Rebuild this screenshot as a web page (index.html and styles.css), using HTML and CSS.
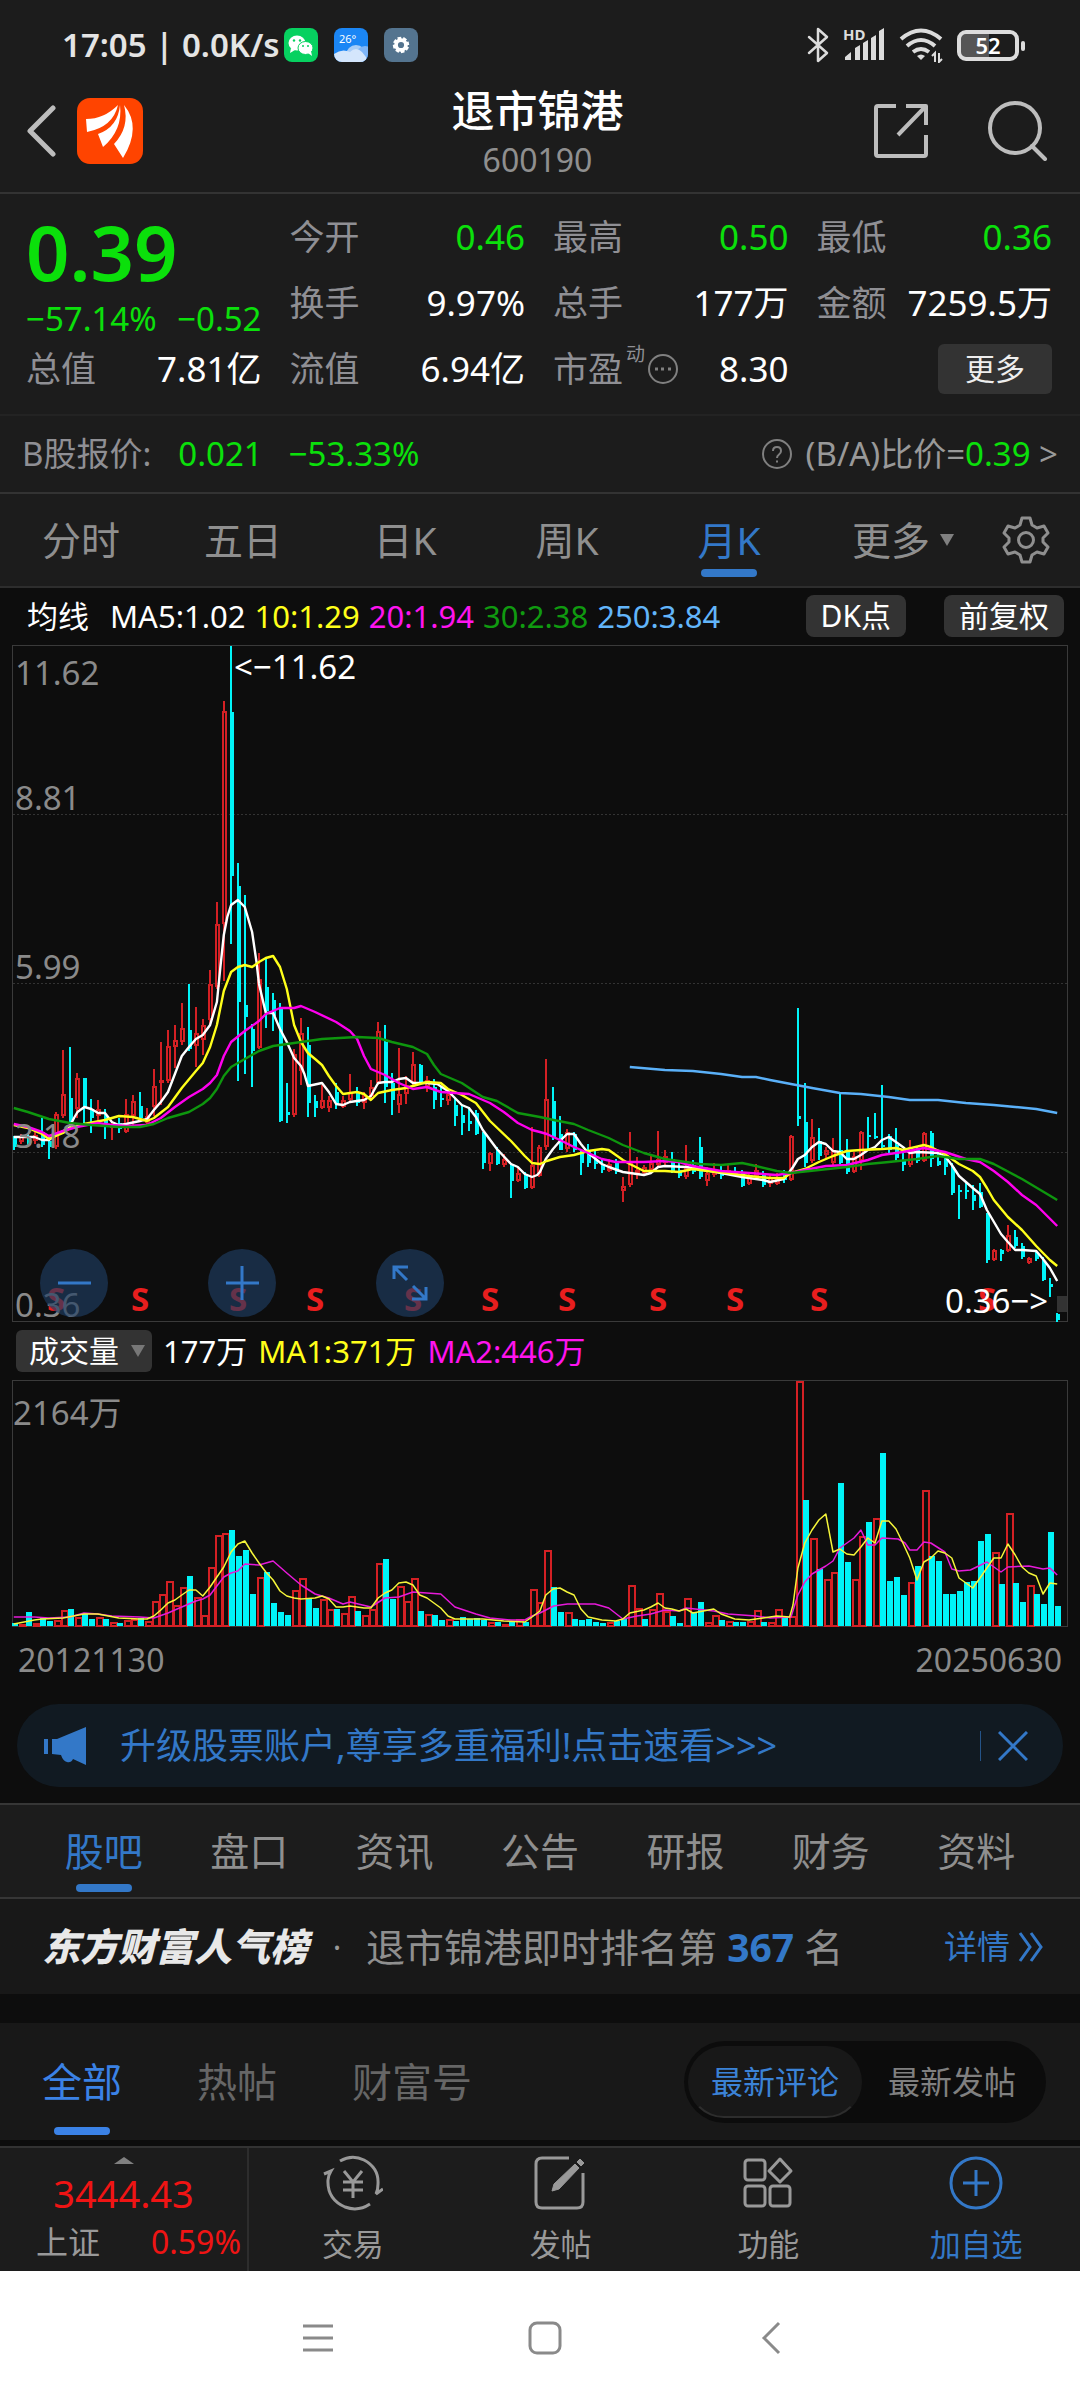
FILE: index.html
```html
<!DOCTYPE html>
<html lang="zh-CN">
<head>
<meta charset="utf-8">
<meta name="viewport" content="width=device-width, initial-scale=1">
<title>退市锦港 600190</title>
<link rel="stylesheet" href="styles.css">
</head>
<body>
<div class="statusbar">
  <div class="status-left">
    <span>17:05 | 0.0K/s</span>
    <svg class="app-badge" viewBox="0 0 34 34" aria-hidden="true"><rect width="34" height="34" rx="8" fill="#07d160"/><ellipse cx="13" cy="15" rx="8.500" ry="7.500" fill="#fff"/><path d="M7 20l-1 5 5-3z" fill="#fff"/><ellipse cx="21.500" cy="20" rx="7.500" ry="6.500" fill="#fff" stroke="#07d160"/><path d="M24 25l4 3-1-5z" fill="#fff"/><g fill="#07d160"><circle cx="10" cy="12.500" r="1.200"/><circle cx="16" cy="12.500" r="1.200"/><circle cx="19" cy="18" r="1"/><circle cx="24" cy="18" r="1"/></g></svg>
    <svg class="app-badge" viewBox="0 0 34 34" aria-hidden="true"><defs><clipPath id="wc"><rect width="34" height="34" rx="8"/></clipPath></defs><g clip-path="url(#wc)"><rect width="34" height="34" fill="#1b86f5"/><circle cx="22" cy="27" r="10" fill="#a9cdf7"/><circle cx="31" cy="27" r="9" fill="#7fb6f8"/><path d="M0 26q8-6 16-2 6-6 12 0 4 4 6 10H0z" fill="#d4e6fc"/></g><text x="5" y="15" font-size="11" fill="#fff">26°</text></svg>
    <svg class="app-badge" viewBox="0 0 34 34" aria-hidden="true"><rect width="34" height="34" rx="8" fill="#54748f"/><circle cx="17" cy="17" r="6.500" fill="none" stroke="#fff" stroke-width="3.500" /><circle cx="17" cy="17" r="4.600" fill="none" stroke="#fff" stroke-width="3"/><circle cx="17" cy="17" r="8" fill="none" stroke="#54748f" stroke-width="2.500" stroke-dasharray="2.200 4.083"/></svg>
  </div>
  <div class="status-right">
    <svg width="22" height="36" viewBox="0 0 22 36" fill="none" stroke="#dcdcdc" stroke-width="2.500" stroke-linejoin="round" stroke-linecap="round" aria-hidden="true"><path d="M2 10l18 16-9 8V2l9 8L2 26"/></svg>
    <svg class="signal" width="42" height="34" viewBox="0 0 42 34" fill="#dcdcdc" aria-hidden="true"><text x="0" y="12" font-size="15" font-weight="700">HD</text><path d="M2 32v-3l6-5v8zM12 20l5-3v15h-5zM20 15l5-3v20h-5zM28 10l5-3v25h-5zM36 3l5-3v32h-5z"/></svg>
    <svg width="44" height="36" viewBox="0 0 44 36" fill="none" stroke="#dcdcdc" stroke-width="4" aria-hidden="true"><path d="M2 12q20-17 40 0M8 19q14-12 28 0M14 25q8-6 16 0"/><path d="M22 33l-4-4q4-3 8 0z" fill="#dcdcdc" stroke="none"/><path d="M36 35v-9l-3 3M40 26v9l3-3" stroke-width="2"/></svg>
    <div class="battery">52</div>
  </div>
</div>

<header class="topbar">
  <div class="top-side">
    <button class="bare" aria-label="返回"><svg width="30" height="52" viewBox="0 0 30 52" fill="none" stroke="#bdbdbd" stroke-width="5" stroke-linecap="round" stroke-linejoin="round"><path d="M26 3L3 26l23 23"/></svg></button>
    <svg class="logo" viewBox="0 0 66 66" aria-hidden="true"><rect width="66" height="66" rx="13" fill="#ff4400"/><g fill="#fff"><path d="M9 21q18 0 32-14-5 22-31 27z"/><path d="M43 7q3 25-17 42l-5-13q20-7 22-29z"/><path d="M47 7q18 22-1 53l-9-14q16-17 10-39z"/></g></svg>
  </div>
  <div class="top-title"><h1>退市锦港</h1><p>600190</p></div>
  <div class="top-side end">
    <button class="bare" aria-label="分享"><svg width="54" height="54" viewBox="0 0 54 54" fill="none" stroke="#bdbdbd" stroke-width="4" stroke-linejoin="round"><path d="M22 2H4q-2 0-2 2v46q0 2 2 2h46q2 0 2-2V31M32 2h20v19M52 2L24 31"/></svg></button>
    <button class="bare" aria-label="搜索"><svg width="60" height="60" viewBox="0 0 60 60" fill="none" stroke="#bdbdbd" stroke-width="4" stroke-linecap="round"><circle cx="27" cy="27" r="25"/><path d="M44 45l13 13"/></svg></button>
  </div>
</header>

<section class="quote">
  <div class="quote-grid">
    <div class="price">
      <strong>0.39</strong>
      <div class="change"><span>−57.14%</span><span>−0.52</span></div>
    </div>
    <div class="kv"><span>今开</span><b class="down">0.46</b></div>
    <div class="kv"><span>最高</span><b class="down">0.50</b></div>
    <div class="kv"><span>最低</span><b class="down">0.36</b></div>
    <div class="kv"><span>换手</span><b>9.97%</b></div>
    <div class="kv"><span>总手</span><b>177万</b></div>
    <div class="kv"><span>金额</span><b>7259.5万</b></div>
    <div class="kv"><span>总值</span><b>7.81亿</b></div>
    <div class="kv"><span>流值</span><b>6.94亿</b></div>
    <div class="kv"><span class="pe">市盈<sup>动</sup><svg width="30" height="30" viewBox="0 0 30 30" fill="none" stroke="#808080" stroke-width="2" aria-hidden="true"><circle cx="15" cy="15" r="14"/><path d="M7 15h3M13 15h3M20 15h3" stroke-width="3"/></svg></span><b>8.30</b></div>
    <div class="kv last"><button class="more">更多</button></div>
  </div>
  <div class="bshare">
    <span class="bshare-label">B股报价:</span><span class="down">0.021</span><span class="down bshare-pct">−53.33%</span>
    <a href="#ratio" class="ratio"><svg width="30" height="30" viewBox="0 0 30 30" aria-hidden="true"><circle cx="15" cy="15" r="14" fill="none" stroke="#808080" stroke-width="2"/><path d="M11 12q0-4 4-4t4 4q0 2-2 3.500-2 1.500-2 3.500M15 21.500v2" fill="none" stroke="#808080" stroke-width="2"/></svg><span>(B/A)比价=<span class="down">0.39</span> &gt;</span></a>
  </div>
</section>

<nav class="periods">
  <button>分时</button><button>五日</button><button>日K</button><button>周K</button><button class="on">月K</button><button>更多<i class="caret"></i></button>
  <button class="gear" aria-label="设置"><svg width="48" height="48" viewBox="0 0 48 48" fill="none" stroke="#8f8f8f" stroke-width="3" stroke-linejoin="round"><path d="M20 2h8l2 7 5 3 7-2 4 7-5 5v4l5 5-4 7-7-2-5 3-2 7h-8l-2-7-5-3-7 2-4-7 5-5v-4l-5-5 4-7 7 2 5-3z"/><circle cx="24" cy="24" r="7.500"/></svg></button>
</nav>

<main class="charts">
  <div class="ma-row">
    <span class="ma-name">均线</span><span>MA5:1.02</span><span class="yellow">10:1.29</span><span class="pink">20:1.94</span><span class="green">30:2.38</span><span class="blue">250:3.84</span>
    <div class="ma-actions"><button>DK点</button><button>前复权</button></div>
  </div>
  <div class="price-chart">
    <svg id="price" viewBox="0 0 1080 677" role="img" aria-label="月K线"></svg>
    <div class="zoomers">
      <button aria-label="缩小"><svg viewBox="0 0 68 68"><path d="M18 34h33"/></svg></button>
      <button aria-label="放大"><svg viewBox="0 0 68 68"><path d="M18 34h33M34 17v34"/></svg></button>
      <button aria-label="全屏"><svg viewBox="0 0 68 68"><path d="M18 30V18h14M18 18l13 13M50 38v12H36M50 50L37 37"/></svg></button>
    </div>
  </div>
  <div class="vol-row">
    <label class="picker"><select aria-label="指标"><option>成交量</option></select><i class="caret"></i></label>
    <span>177万</span><span class="yellow">MA1:371万</span><span class="pink">MA2:446万</span>
  </div>
  <svg id="volume" viewBox="0 0 1080 248" role="img" aria-label="成交量"></svg>
  <div class="dates"><span>20121130</span><span>20250630</span></div>
  <div class="promo">
    <svg width="42" height="38" viewBox="0 0 42 38" fill="#3378c8" aria-hidden="true"><path d="M0 12h4v15H0zM8 12h5L42 0v38l-13-6q-2 4-6 3t-6-7l-9-1z"/></svg>
    <a href="#promo">升级股票账户,尊享多重福利!点击速看&gt;&gt;&gt;</a>
    <button class="bare close" aria-label="关闭"><svg width="30" height="30" viewBox="0 0 30 30" stroke="#3378c8" stroke-width="3"><path d="M1 1l28 28M29 1L1 29"/></svg></button>
  </div>
</main>

<nav class="sections">
  <button class="on">股吧</button><button>盘口</button><button>资讯</button><button>公告</button><button>研报</button><button>财务</button><button>资料</button>
</nav>

<section class="rank">
  <h2>东方财富人气榜</h2><span class="dot">·</span>
  <p>退市锦港即时排名第 <b>367</b> 名</p>
  <a href="#rank">详情<svg width="26" height="30" viewBox="0 0 26 30" fill="none" stroke="#3378c8" stroke-width="3" aria-hidden="true"><path d="M2 1l10 14L2 29M13 1l10 14-10 14"/></svg></a>
</section>

<section class="posts">
  <button class="on">全部</button><button>热帖</button><button>财富号</button>
  <div class="toggle"><button class="picked">最新评论</button><button>最新发帖</button></div>
</section>

<footer class="dock">
  <a href="#index" class="index">
    <i class="caret up"></i>
    <strong>3444.43</strong>
    <span class="index-row"><span>上证</span><em>0.59%</em></span>
  </a>
  <a href="#trade"><svg width="60" height="56" viewBox="0 0 60 56" fill="none" stroke="#999" stroke-width="3" aria-hidden="true"><path d="M17 6q12-7 24-1 15 8 14 24 0 6-2 10l7-5M47 49q-12 8-25 3-18-8-17-27 0-4 3-9l-7 3"/><path d="M21 16l9 11 9-11M30 27v16M20 27h20M20 35h20"/></svg>交易</a>
  <a href="#post"><svg width="56" height="56" viewBox="0 0 56 56" fill="none" stroke="#999" stroke-width="3" aria-hidden="true"><path d="M36 3H9q-6 0-6 6v38q0 6 6 6h35q6 0 6-6V18"/><path d="M19 36l2-7 21-20 4 4-20 21z M44 7l3-3 4 4-3 3z" fill="#999" stroke-width="1"/></svg>发帖</a>
  <a href="#tools"><svg width="56" height="56" viewBox="0 0 56 56" fill="none" stroke="#999" stroke-width="3" stroke-linejoin="round" aria-hidden="true"><rect x="5" y="5" width="20" height="20" rx="3"/><rect x="5" y="31" width="20" height="20" rx="3"/><rect x="30" y="31" width="20" height="20" rx="3"/><path d="M40 4l11 12-11 11-11-11z"/></svg>功能</a>
  <a href="#watch" class="add"><svg width="56" height="56" viewBox="0 0 56 56" fill="none" stroke="#3378c8" stroke-width="3" aria-hidden="true"><circle cx="28" cy="28" r="25"/><path d="M15 28h26M28 15v26"/></svg>加自选</a>
</footer>

<div class="sysnav">
  <button class="bare" aria-label="菜单"><svg width="30" height="32" viewBox="0 0 30 32" stroke="#8a8a8a" stroke-width="3"><path d="M0 4h30M0 16h30M0 28h30"/></svg></button>
  <button class="bare" aria-label="主页"><svg width="34" height="34" viewBox="0 0 34 34" fill="none" stroke="#8a8a8a" stroke-width="3"><rect x="2" y="2" width="30" height="30" rx="7"/></svg></button>
  <button class="bare" aria-label="后退"><svg width="26" height="34" viewBox="-4 0 26 34" fill="none" stroke="#8a8a8a" stroke-width="3"><path d="M18 2L3 17l15 15"/></svg></button>
</div>
<script src="chart.js"></script>
</body>
</html>
```
FILE: styles.css
```css
* { box-sizing: border-box; }
body {
  display: flex;
  flex-direction: column;
  min-height: 100vh;
  margin: 0;
  background: #0d0d0d;
  color: #fff;
  font: 32px/40px "Noto Sans", "Noto Sans CJK SC", sans-serif;
}
h1, h2, p { margin: 0; font-weight: 400; }
button, select { font: inherit; color: inherit; background: none; border: 0; padding: 0; margin: 0; }
a { color: inherit; text-decoration: none; }
svg { display: block; flex: none; }
.bare { display: flex; }
.down { color: #0be00b; }
.yellow { color: #ffff1a; }
.pink { color: #ff14ee; }
.green { color: #109a10; }
.blue { color: #62b5fa; }
.caret {
  display: inline-block;
  border: 7px solid transparent;
  border-top: 12px solid #808080;
  border-bottom: 0;
}

.statusbar {
  display: flex;
  justify-content: space-between;
  padding: 25px 55px 23px 62px;
  background: #1c1c1c;
  color: #e4e4e4;
}
.status-left, .status-right { display: flex; align-items: center; }
.status-left { gap: 16px; font-size: 33px; font-weight: 600; }
.status-left span { margin-right: -12px; }
.status-right { gap: 14px; }
.signal { overflow: visible; }
.app-badge { width: 34px; height: 34px; font-weight: 400; }
.battery {
  position: relative;
  width: 62px;
  border: 4px solid #dcdcdc;
  border-radius: 9px;
  margin-right: 6px;
  background: linear-gradient(90deg, #555 52%, #1c1c1c 52%);
  color: #fff;
  font-size: 22px;
  font-weight: 600;
  line-height: 23px;
  text-align: center;
}
.battery::after {
  content: "";
  position: absolute;
  right: -10px;
  top: 7px;
  width: 4px;
  height: 10px;
  border-radius: 2px;
  background: #dcdcdc;
}

.topbar {
  display: flex;
  align-items: center;
  justify-content: space-between;
  padding: 0 32px 5px 27px;
  background: #1c1c1c;
  border-bottom: 2px solid #333;
}
.top-side { flex: 1; display: flex; align-items: center; gap: 20px; padding-bottom: 14px; }
.top-side.end { justify-content: flex-end; gap: 60px; }
.logo { width: 66px; height: 66px; }
.top-title { text-align: center; }
.top-title h1 { font-size: 43px; line-height: 45px; font-weight: 500; }
.top-title p { color: #8f8f8f; line-height: 54px; }

.quote { background: #1c1c1c; border-bottom: 2px solid #333; }
.quote-grid {
  display: grid;
  grid-template-columns: repeat(4, 1fr);
  grid-auto-rows: 66px;
  gap: 0 28px;
  padding: 10px 28px 12px 26px;
  border-bottom: 2px solid #232323;
}
.price { grid-row: span 2; display: flex; flex-direction: column; color: #0be00b; }
.price strong { font-size: 76px; line-height: 96px; font-weight: 600; }
.change { display: flex; justify-content: space-between; font-size: 33px; line-height: 38px; }
.kv { display: flex; align-items: center; justify-content: space-between; font-size: 35px; }
.kv > span { color: #8f8f94; }
.kv b { font-size: 35px; font-weight: 400; }
.kv.last { justify-content: flex-end; }
.pe { display: flex; align-items: center; gap: 3px; }
.pe sup { align-self: flex-start; font-size: 19px; line-height: 10px; }
.more { width: 114px; height: 50px; border-radius: 6px; background: #333; font-size: 30px; color: #eee; }
.bshare { display: flex; padding: 18px 22px; font-size: 33px; }
.bshare-label { color: #8f8f94; margin-right: 27px; }
.bshare-pct { margin-left: 26px; }
.ratio { display: flex; align-items: center; gap: 14px; margin-left: auto; color: #999; }

.periods { display: grid; grid-template-columns: repeat(6, 3fr) 2fr; background: #1c1c1c; border-bottom: 2px solid #2d2d2d; }
.periods button, .sections button, .posts > button { position: relative; color: #8f8f8f; font-size: 39px; line-height: 92px; }
.periods .gear { display: flex; align-items: center; justify-content: center; }
.periods .caret { position: absolute; right: 18px; top: 40px; }
.periods .on, .sections .on { color: #3378c8; }
.on::after {
  content: "";
  position: absolute;
  left: calc(50% - 28px);
  bottom: 9px;
  width: 56px;
  height: 8px;
  border-radius: 4px;
  background: currentColor;
}

.ma-row { display: flex; align-items: center; gap: 9px; padding: 7px 16px 8px 27px; font-size: 31px; line-height: 42px; }
.ma-name { margin-right: 12px; }
.ma-actions { display: flex; gap: 38px; margin-left: auto; }
.ma-actions button { padding: 0 15px; border-radius: 8px; background: #333; font-size: 30px; line-height: 42px; }
.price-chart { position: relative; }
.price-chart svg, #volume { width: 100%; height: auto; }
.zoomers { position: absolute; left: 40px; bottom: 5px; display: flex; gap: 100px; }
.zoomers button { width: 68px; height: 68px; border-radius: 50%; background: rgba(30, 62, 98, .65); }
.zoomers svg { fill: none; stroke: #3378c8; stroke-width: 3; }
.axis { fill: #8a8a8a; font-size: 33px; }
.mark { fill: #fff; font-size: 33px; }
.sell { fill: #e81e1e; font-size: 33px; font-weight: 700; text-anchor: middle; }

.vol-row { display: flex; align-items: center; gap: 11px; padding: 8px 16px; font-size: 31px; line-height: 42px; }
.picker { display: flex; align-items: center; gap: 12px; width: 136px; padding: 0 7px 0 13px; border-radius: 6px; background: #333; }
.picker select { appearance: none; width: 92px; font-size: 30px; line-height: 42px; }
.picker .caret { border-top-color: #777; flex: none; }
.dates { display: flex; justify-content: space-between; padding: 12px 18px 24px; color: #8a8a8a; }
.promo {
  display: flex;
  align-items: center;
  gap: 34px;
  margin: 0 17px 16px;
  padding: 0 35px 0 27px;
  border-radius: 42px;
  background: #111a22;
  color: #3378c8;
  font-size: 36px;
  line-height: 83px;
}
.close { margin-left: auto; padding-left: 17px; border-left: 1px solid #245388; }

.sections { display: grid; grid-template-columns: repeat(7, 1fr); padding: 0 31px; background: #1c1c1c; border: solid #363636; border-width: 2px 0; }
.sections .on::after { bottom: 5px; }
.rank { display: flex; align-items: center; padding: 0 36px 0 42px; background: #181818; line-height: 95px; margin-bottom: 29px; }
.rank h2 { color: #e8e8e8; font-size: 38px; font-style: italic; font-weight: 900; }
.dot { width: 58px; text-align: center; color: #999; }
.rank p { color: #8f8f8f; font-size: 39px; }
.rank b { color: #3378c8; font-weight: 700; }
.rank a { display: flex; align-items: center; gap: 8px; margin-left: auto; color: #3378c8; font-size: 33px; }

.posts { display: flex; align-items: center; gap: 75px; padding: 0 34px 0 42px; background: #181818; margin-bottom: 6px; }
.posts > button { color: #666; font-size: 40px; line-height: 117px; }
.posts > .on { color: #3b82e6; }
.posts .on::after { bottom: 5px; }
.toggle { display: flex; margin-left: auto; padding: 5px 4px; border-radius: 42px; background: #0c0c0c; font-size: 32px; line-height: 68px; color: #808080; }
.toggle button { padding: 0 24px; border-radius: 36px; border: 2px solid transparent; }
.toggle .picked { padding: 0 21px; color: #3b82d6; background: #181818; border-bottom-color: #2d2d2d; }

.dock { display: grid; grid-template-columns: 249px repeat(4, 1fr); border-top: 2px solid #333; background: #1c1c1c; color: #999; }
.dock > a { display: flex; flex-direction: column; align-items: center; gap: 13px; padding: 7px 0; font-size: 31px; }
.dock > .index { gap: 6px; padding: 9px 0 0; border-right: 2px solid #2d2d2d; font-size: 32px; }
.index strong { color: #f01414; font-size: 38px; line-height: 46px; font-weight: 400; }
.caret.up { border: 10px solid transparent; border-top: 0; border-bottom: 7px solid #808080; }
.index-row { display: flex; justify-content: space-between; width: 100%; padding: 0 6px 0 36px; }
.index-row em { color: #f01414; font-style: normal; }
.dock > .add { color: #3378c8; }

.sysnav { flex: 1; display: flex; align-items: center; justify-content: center; gap: 195px; padding: 49px 0 45px 6px; background: #fff; }
```
FILE: chart.js
```js
// One row per month: direction, high, body top, body bottom, low.
// Heights count downwards from the top of the plot.
var candles = `d 1130 1135 1155 1160,u 1125 1130 1143 1148,d 1125 1132 1150 1152,u 1120 1128 1140 1148,d 1090 1120 1150 1154,d 1130 1140 1155 1180,u 1075 1080 1155 1158,u 938 1035 1085 1090,d 930 1045 1100 1105,u 988 1000 1070 1090,
d 1000 1000 1065 1100,d 1047 1070 1090 1123,u 1050 1070 1085 1100,d 1070 1085 1100 1137,u 1100 1105 1110 1138,d 1090 1100 1115 1122,u 1046 1080 1120 1122,u 1037 1052 1085 1110,d 1030 1062 1090 1095,u 1066 1085 1100 1105,
u 980 1018 1065 1085,u 918 1005 1007 1060,u 893 928 1007 1010,u 880 914 930 978,u 832 888 920 925,d 790 892 935 940,u 840 900 928 975,u 868 880 915 948,u 757 790 870 880,u 605 654 795 800,
u 155 178 655 782,d 32 180 548 700,d 517 570 830 1007,d 590 836 862 990,d 878 890 940 1020,u 720 778 932 935,d 732 796 850 888,d 810 826 860 895,d 832 845 1095 1098,d 1010 1075 1083 1100,
u 935 945 1083 1088,u 865 900 985 1015,d 886 925 1055 1088,d 1037 1052 1068 1088,u 1015 1050 1068 1070,u 1040 1048 1068 1075,d 1010 1030 1055 1070,u 1040 1050 1065 1068,u 990 1030 1050 1052,d 1020 1030 1055 1062,
u 1030 1038 1055 1070,u 1005 1020 1040 1048,u 874 895 1010 1015,d 880 920 1020 1055,d 988 1012 1050 1082,u 932 1035 1060 1077,u 995 1015 1035 1057,u 942 968 1010 1015,d 968 970 1010 1015,u 995 1005 1020 1032,
d 1002 1020 1048 1070,d 1020 1045 1050 1065,u 1025 1035 1052 1060,d 1045 1060 1085 1108,d 1062 1082 1100 1128,d 1065 1095 1102 1118,d 1072 1078 1125 1128,d 1120 1125 1190 1204,u 1165 1168 1192 1208,d 1155 1162 1192 1195,
u 1170 1180 1195 1200,d 1190 1195 1230 1268,u 1200 1212 1230 1232,d 1210 1218 1246 1248,u 1110 1195 1245 1248,u 1150 1155 1220 1222,u 958 1046 1155 1160,d 1020 1052 1135 1138,d 1085 1125 1160 1162,u 1115 1120 1158 1165,
d 1120 1125 1162 1165,d 1160 1165 1190 1217,d 1147 1160 1190 1200,d 1160 1180 1192 1203,d 1180 1195 1205 1212,u 1180 1192 1208 1210,d 1180 1185 1210 1215,u 1222 1242 1252 1277,u 1120 1190 1240 1244,u 1177 1205 1215 1227,
u 1195 1200 1212 1218,u 1175 1190 1205 1210,u 1118 1180 1195 1202,u 1160 1175 1190 1200,d 1165 1180 1208 1212,d 1190 1205 1220 1224,u 1150 1200 1222 1226,d 1183 1195 1210 1215,d 1132 1155 1222 1226,u 1200 1212 1230 1242,
u 1190 1205 1218 1222,d 1195 1205 1220 1225,u 1195 1205 1215 1217,d 1200 1208 1218 1220,d 1205 1212 1242 1244,u 1210 1218 1238 1240,u 1192 1205 1220 1225,d 1208 1215 1240 1243,u 1215 1222 1238 1244,u 1213 1222 1238 1240,
d 1205 1212 1228 1235,u 1128 1130 1228 1230,d 843 1085 1092 1107,d 1011 1098 1190 1200,u 1092 1132 1185 1190,d 1112 1140 1175 1183,u 1155 1160 1172 1180,u 1135 1160 1190 1195,d 1033 1160 1190 1193,d 1137 1165 1210 1215,
u 1165 1175 1210 1213,u 1118 1120 1185 1205,d 1087 1128 1130 1160,d 1077 1130 1133 1137,d 1015 1150 1155 1158,d 1125 1130 1160 1170,d 1112 1150 1178 1183,d 1165 1185 1195 1208,u 1138 1155 1195 1198,d 1155 1160 1185 1190,
u 1120 1122 1185 1188,d 1118 1122 1180 1200,d 1160 1185 1195 1197,d 1170 1180 1200 1218,d 1190 1200 1258 1262,d 1240 1250 1252 1315,d 1232 1250 1255 1270,d 1240 1262 1275 1295,d 1235 1255 1288 1290,d 1303 1305 1408 1415,
u 1382 1384 1408 1410,d 1383 1386 1395 1410,u 1328 1352 1388 1390,d 1340 1355 1375 1380,d 1370 1375 1400 1405,u 1400 1402 1414 1416,d 1385 1392 1405 1410,d 1400 1410 1452 1455,d 1448 1462 1468 1490,d 1525 1528 1542 1546`;

var volumes = `d935 u938 d902 u935 d915 d928 u925 u895 d893 u915 d908 d923 u915 d923 u930 d933 u925 u922 d920 u928 u868 u848 u808 u880 u827 d792 u856 u910 u767 u670
u665 d654 d732 d714 d846 u796 d780 d873 d900 d909 u836 u800 d862 d888 u862 u893 d893 u905 u853 d897 u910 u893 u755 d741 d863 u822 u868 u800 d897 u908
d911 d926 u923 d927 d915 d921 d920 d926 u930 d930 u938 d931 u923 d930 u832 u872 u716 d825 d900 u901 d921 d924 d921 d930 d933 u930 d927 d922 u821 u890
d923 u893 u843 u898 d914 d933 u860 d902 d870 u930 u911 d924 u928 d930 d930 u928 u896 d930 u930 u893 d915 u912 u208 d564 u680 d773 u803 u782 d513 d750
u802 u672 d630 u620 d423 d807 d795 d849 u812 d762 u534 d733 d747 d846 d846 d837 d811 d807 d687 d666 u722 d816 u605 d813 d870 u819 d846 d876 d660 d882`;

// Moving averages; each line is split where the second half of the time axis starts.
var priceLines = [
  ['#fff', '40,1132 100,1132 122,1138 142,1138 162,1128 200,1112 215,1090 225,1075 245,1065 265,1070 285,1078 305,1078 325,1098 345,1105 366,1102 406,1096 427,1092 447,1072 467,1053 488,1030 508,990 528,950 549,930 569,913 589,903 610,880 630,830 640,750 650,680 660,640 671,612 691,601 711,617 732,672 745,740 752,790 772,853 793,853 813,890 833,920 854,955 874,972 884,990 894,1017 935,1010 955,1030 976,1058 996,1060 1016,1053 1057,1049 1077,1040 1098,1012 1118,1009 1138,1008 1158,1003 1179,1000 1199,1012 1240,1010 1270,1014 1301,1028 1341,1060 1362,1068 1382,1088 1402,1116 1443,1158 1484,1192 1504,1198 1524,1215 1545,1222 1560,1218',
    '0,1210 17,1180 38,1158 58,1140 79,1126 99,1126 119,1148 140,1168 180,1192 200,1198 241,1211 302,1218 322,1213 343,1200 363,1196 424,1198 465,1204 526,1212 587,1222 648,1228 668,1232 708,1226 720,1215 735,1200 749,1182 769,1173 790,1155 810,1143 830,1148 851,1163 871,1165 891,1180 912,1180 932,1172 952,1160 973,1155 993,1138 1013,1131 1034,1143 1054,1155 1074,1168 1095,1166 1156,1167 1176,1175 1196,1195 1217,1220 1237,1232 1257,1247 1278,1260 1298,1295 1339,1350 1359,1368 1380,1384 1400,1384 1441,1388 1461,1405 1481,1425 1502,1455'],
  ['#ffff1a', '40,1106 81,1112 122,1125 142,1136 183,1122 203,1112 244,1103 305,1094 345,1084 386,1087 427,1095 447,1090 488,1065 528,1022 569,985 589,965 610,930 630,880 650,805 671,762 691,752 711,746 732,752 752,740 772,731 793,727 813,752 833,800 854,880 874,918 894,943 915,958 935,970 955,995 976,1017 996,1036 1037,1030 1057,1035 1077,1048 1098,1033 1138,1026 1179,1022 1219,1014 1240,1008 1280,1012 1301,1025 1341,1037 1382,1055 1423,1095 1484,1140 1524,1175 1545,1190',
    '0,1192 20,1185 58,1177 99,1172 140,1163 180,1158 200,1162 241,1183 261,1192 302,1207 363,1208 404,1210 444,1203 485,1208 546,1212 607,1220 668,1223 708,1224 729,1213 769,1204 810,1188 851,1174 891,1164 932,1160 993,1158 1034,1156 1054,1160 1115,1150 1135,1155 1176,1170 1217,1192 1257,1208 1278,1222 1298,1245 1318,1272 1359,1310 1400,1340 1441,1375 1481,1408 1502,1420'],
  ['#ff00ee', '40,1103 81,1110 122,1120 142,1130 183,1118 223,1110 284,1100 325,1106 366,1108 427,1104 467,1090 508,1065 549,1042 589,1025 610,1010 630,993 650,950 671,920 711,895 752,872 772,857 813,843 854,842 874,838 915,852 976,875 1016,895 1037,912 1057,950 1077,980 1118,993 1158,1010 1199,1025 1240,1020 1280,1030 1362,1035 1423,1055 1463,1075 1504,1100 1545,1117',
    '0,1120 20,1125 58,1138 99,1155 140,1168 180,1180 220,1187 302,1188 363,1185 404,1188 444,1196 526,1207 607,1212 688,1218 729,1212 769,1205 830,1197 891,1195 952,1183 993,1173 1054,1165 1115,1157 1176,1165 1237,1180 1278,1188 1318,1208 1359,1232 1400,1262 1441,1285 1502,1332'],
  ['#0e960e', '40,1067 81,1075 142,1092 203,1101 264,1104 345,1110 406,1109 447,1102 488,1090 549,1076 589,1058 610,1045 630,1025 650,995 671,975 711,958 752,940 793,928 854,922 935,913 1037,907 1098,910 1138,918 1199,930 1240,945 1260,970 1280,990 1341,1010 1402,1042 1443,1052 1504,1077',
    '0,1088 40,1093 99,1103 140,1117 200,1135 241,1150 302,1168 363,1180 424,1188 465,1193 526,1195 587,1190 627,1196 688,1208 729,1212 810,1205 891,1200 952,1192 1013,1187 1095,1180 1156,1175 1217,1180 1278,1182 1318,1193 1400,1225 1502,1272'],
  ['#5ab0f8', '', '261,974 363,981 444,983 526,990 587,997 627,998 668,1005 729,1013 790,1023 871,1033 932,1036 1013,1043 1074,1048 1156,1050 1237,1055 1318,1060 1380,1064 1441,1070 1502,1077']
];
var volumeLines = [
  ['#e61ad9', '40,916 100,917 142,919 203,915 244,905 284,907 325,914 406,915 447,920 488,905 528,885 569,867 589,862 610,850 630,822 650,795 671,783 691,778 711,758 752,760 793,748 833,785 874,820 915,848 955,860 996,876 1016,870 1077,885 1118,860 1158,856 1199,842 1280,848 1321,885 1382,906 1423,920 1484,926 1524,925 1545,912',
    '0,905 40,882 80,876 160,876 200,890 241,922 282,912 322,908 363,895 404,897 424,888 505,897 546,906 627,914 668,920 729,917 749,850 769,810 790,788 830,762 851,747 871,710 912,680 932,655 952,700 973,700 993,680 1040,681 1060,693 1074,716 1095,716 1115,692 1135,695 1176,720 1196,772 1217,777 1250,776 1298,750 1339,780 1359,765 1420,763 1461,773 1481,770 1502,790'],
  ['#f5f53a', '40,936 100,925 122,921 183,918 244,907 284,908 345,920 406,923 427,922 447,912 467,895 488,875 508,866 528,850 549,834 569,834 589,852 610,825 630,795 650,765 671,720 691,698 711,687 732,725 752,755 772,782 793,805 813,838 833,852 854,860 874,862 915,860 935,852 955,862 976,885 996,887 1016,882 1057,888 1077,888 1098,860 1118,843 1138,835 1158,815 1179,810 1199,820 1219,850 1240,860 1280,888 1301,914 1321,921 1402,922 1463,928 1524,930 1545,915',
    '0,898 17,850 38,832 58,828 79,842 99,850 119,893 140,915 180,925 220,927 241,922 261,905 302,896 322,886 343,873 363,888 383,892 404,897 424,893 444,903 505,893 526,907 566,923 607,926 648,920 688,914 725,915 735,880 749,770 769,695 790,655 810,625 830,607 851,720 871,712 891,726 912,731 932,705 952,680 973,695 993,629 1013,629 1034,652 1054,695 1074,740 1095,805 1115,750 1135,738 1156,717 1176,725 1196,740 1217,800 1237,815 1257,828 1278,800 1318,738 1339,740 1359,698 1380,730 1400,765 1420,785 1441,793 1461,846 1481,815 1502,816']
];

var UP = '#d42024', DOWN = '#00f4f8', STEP = 7, START = 14;
function priceY(v) { return Math.round((v - 32) / 2.24) + 1; }
function volumeY(v) { return Math.round((v - 208) / 3) + 1; }
function rect(x, y, w, h, fill, stroke) {
  return '<rect x="' + x + '" y="' + y + '" width="' + w + '" height="' + h + '" fill="' + fill + '"' +
    (stroke ? ' stroke="' + stroke + '" stroke-width="2"' : '') + '/>';
}
function text(cls, x, y, s) {
  return '<text class="' + cls + '" x="' + x + '" y="' + y + '">' + s + '</text>';
}
function line(row, toY, width) {
  var points = [];
  [row[1], row[2]].forEach(function (half, n) {
    if (!half) return;
    half.split(' ').forEach(function (p) {
      var q = p.split(',');
      points.push(((+q[0] + n * 1568) / 2.904).toFixed(1) + ',' + toY(+q[1]));
    });
  });
  return '<polyline points="' + points.join(' ') + '" fill="none" stroke-linejoin="round" stroke="' + row[0] + '" stroke-width="' + width + '"/>';
}

var out = '<rect x="12.5" y="0.5" width="1055" height="676" fill="none" stroke="#3a3a3a"/>';
[169, 338, 507].forEach(function (y) {
  out += '<path d="M13 ' + y + '.5H1067" stroke="#333" stroke-dasharray="2 2"/>';
});
candles.split(',').forEach(function (row, i) {
  var c = row.trim().split(' '), x = START + STEP * i;
  var hi = priceY(+c[1]), top = priceY(+c[2]), bottom = priceY(+c[3]), lo = priceY(+c[4]);
  if (c[0] === 'd') {
    out += rect(x - 1, hi, 2, lo - hi, DOWN) + rect(x - 1, top, 4, Math.max(2, bottom - top), DOWN);
  } else {
    out += rect(x - 1, hi, 2, Math.max(0, top - hi), UP) + rect(x - 1, bottom, 2, Math.max(0, lo - bottom), UP) +
      rect(x - 1, top + 1, 3, Math.max(1, bottom - top - 2), 'none', UP);
  }
});
priceLines.forEach(function (row) { out += line(row, priceY, 2.4); });
out += rect(1057, 651, 10, 16, '#333');
[56, 140, 238, 315, 413, 490, 567, 658, 735, 819, 987].forEach(function (x) { out += text('sell', x, 666, 'S'); });
out += text('axis', 15, 40, '11.62') + text('axis', 15, 165, '8.81') + text('axis', 15, 334, '5.99') +
  text('axis', 15, 503, '3.18') + text('axis', 15, 672, '0.36') +
  text('mark', 234, 34, '&lt;−11.62') + text('mark', 945, 668, '0.36−&gt;');
document.getElementById('price').innerHTML = out;

out = '<rect x="12.5" y="0.5" width="1055" height="246" fill="none" stroke="#3a3a3a"/>';
volumes.split(/\s+/).forEach(function (v, i) {
  var x = START + STEP * i, y = volumeY(+v.slice(1));
  out += v[0] === 'd' ? rect(x - 2, y, 6, 246 - y, DOWN) : rect(x - 1, y + 1, 6, Math.max(1, 245 - y), 'none', UP);
});
volumeLines.forEach(function (row) { out += line(row, volumeY, 1.5); });
out += text('axis', 13, 45, '2164万');
document.getElementById('volume').innerHTML = out;
```
